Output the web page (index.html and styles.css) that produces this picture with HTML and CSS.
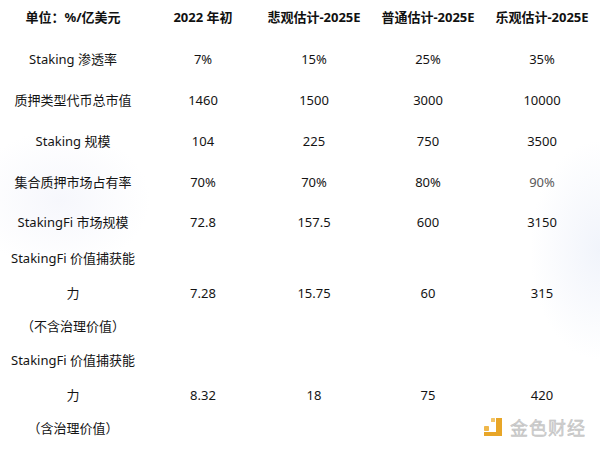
FILE: index.html
```html
<!DOCTYPE html>
<html lang="zh-CN">
<head>
<meta charset="utf-8">
<title>StakingFi 市场规模估计</title>
<link rel="stylesheet" href="styles.css">
</head>
<body>
<div class="page">
  <div class="table">
    <div class="row head">
      <div class="cell">单位：%/亿美元</div>
      <div class="cell">2022 年初</div>
      <div class="cell">悲观估计-2025E</div>
      <div class="cell">普通估计-2025E</div>
      <div class="cell">乐观估计-2025E</div>
    </div>
    <div class="row">
      <div class="cell">Staking 渗透率</div>
      <div class="cell">7%</div>
      <div class="cell">15%</div>
      <div class="cell">25%</div>
      <div class="cell">35%</div>
    </div>
    <div class="row">
      <div class="cell">质押类型代币总市值</div>
      <div class="cell">1460</div>
      <div class="cell">1500</div>
      <div class="cell">3000</div>
      <div class="cell">10000</div>
    </div>
    <div class="row">
      <div class="cell">Staking 规模</div>
      <div class="cell">104</div>
      <div class="cell">225</div>
      <div class="cell">750</div>
      <div class="cell">3500</div>
    </div>
    <div class="row">
      <div class="cell">集合质押市场占有率</div>
      <div class="cell">70%</div>
      <div class="cell">70%</div>
      <div class="cell">80%</div>
      <div class="cell muted">90%</div>
    </div>
    <div class="row short">
      <div class="cell">StakingFi 市场规模</div>
      <div class="cell">72.8</div>
      <div class="cell">157.5</div>
      <div class="cell">600</div>
      <div class="cell">3150</div>
    </div>
    <div class="row multi">
      <div class="cell lines">
        <span class="l1">StakingFi 价值捕获能</span>
        <span class="l2">力</span>
        <span class="l3">（不含治理价值）</span>
      </div>
      <div class="cell val">7.28</div>
      <div class="cell val">15.75</div>
      <div class="cell val">60</div>
      <div class="cell val">315</div>
    </div>
    <div class="row multi">
      <div class="cell lines">
        <span class="l1">StakingFi 价值捕获能</span>
        <span class="l2">力</span>
        <span class="l3">（含治理价值）</span>
      </div>
      <div class="cell val">8.32</div>
      <div class="cell val">18</div>
      <div class="cell val">75</div>
      <div class="cell val">420</div>
    </div>
  </div>

  <div class="watermark">
    <svg class="logo" width="20" height="20" viewBox="0 0 20 20" aria-hidden="true">
      <rect x="1" y="9" width="5" height="5" rx="0.8" fill="#efb74a"/>
      <rect x="8" y="1" width="4" height="4" rx="0.6" fill="#f2c466"/>
      <path d="M13 1 H19 V19 H1 V15 H13 Z" fill="#e8a628"/>
    </svg>
    <span class="brand">金色财经</span>
  </div>
</div>
</body>
</html>
```
FILE: styles.css
```css
html, body {
  margin: 0;
  padding: 0;
}

body {
  width: 600px;
  height: 449px;
  overflow: hidden;
  background:
    radial-gradient(ellipse 70px 110px at 600px 250px, #f1f4fb 0%, rgba(241,244,251,0) 100%),
    radial-gradient(ellipse 90px 70px at 60px 200px, #f6f7fc 0%, rgba(246,247,252,0) 100%),
    #ffffff;
  font-family: "Noto Sans", "Noto Sans CJK SC", sans-serif;
  color: #141414;
}

.page {
  position: relative;
  width: 600px;
  height: 449px;
}

.table {
  display: flex;
  flex-direction: column;
}

.row {
  display: grid;
  grid-template-columns: 146px 114px 108px 120px 108px;
  height: 41px;
  align-items: center;
  font-size: 13px;
  line-height: 18px;
}

.row.head {
  height: 34px;
  padding-bottom: 4px;
  font-weight: 700;
  color: #111;
}

.row.short {
  height: 39px;
}

.row.multi {
  height: 102px;
  align-items: start;
}

.cell {
  text-align: center;
  white-space: nowrap;
}

.muted {
  color: #5a5a5a;
}

.lines {
  display: flex;
  flex-direction: column;
  align-items: center;
}

.lines span {
  display: block;
}

.l1 {
  height: 35px;
  line-height: 35px;
}

.l2 {
  height: 34px;
  line-height: 34px;
}

.l3 {
  height: 33px;
  line-height: 33px;
}

.val {
  padding-top: 35px;
  line-height: 34px;
}

.watermark {
  position: absolute;
  left: 483px;
  top: 417px;
  display: flex;
  align-items: center;
  gap: 7px;
}

.logo {
  display: block;
}

.brand {
  font-family: "Noto Sans CJK SC", sans-serif;
  font-size: 18px;
  line-height: 20px;
  letter-spacing: 1px;
  color: #d2d2d2;
  -webkit-text-stroke: 0.4px #b8b8b8;
}
```
